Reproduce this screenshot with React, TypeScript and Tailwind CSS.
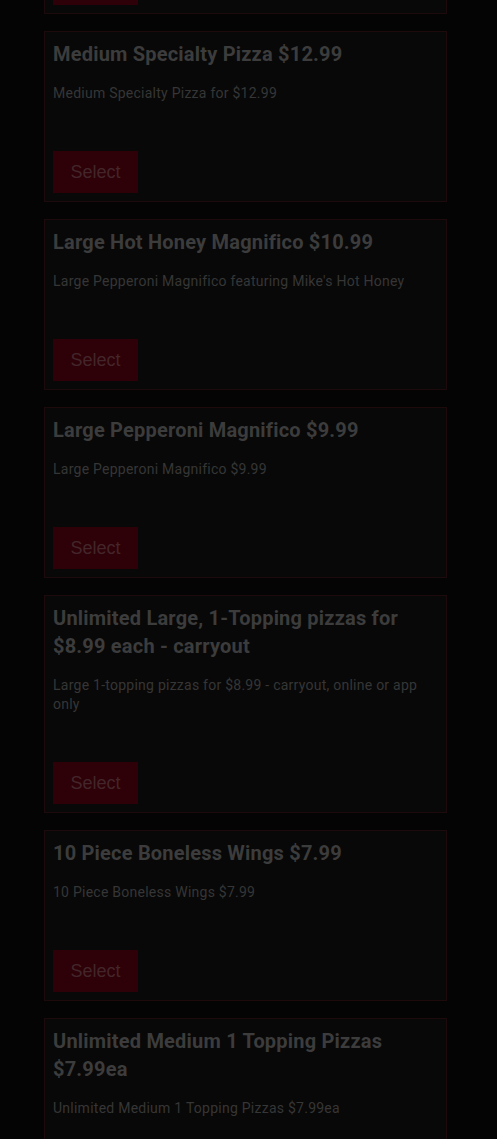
import React from 'react';

interface Deal {
  title: string;
  description: string;
}

const deals: Deal[] = [
  { title: 'Medium Specialty Pizza $12.99', description: 'Medium Specialty Pizza for $12.99' },
  { title: 'Large Hot Honey Magnifico $10.99', description: "Large Pepperoni Magnifico featuring Mike's Hot Honey" },
  { title: 'Large Pepperoni Magnifico $9.99', description: 'Large Pepperoni Magnifico $9.99' },
  {
    title: 'Unlimited Large, 1-Topping pizzas for $8.99 each - carryout',
    description: 'Large 1-topping pizzas for $8.99 - carryout, online or app only',
  },
  { title: '10 Piece Boneless Wings $7.99', description: '10 Piece Boneless Wings $7.99' },
  { title: 'Unlimited Medium 1 Topping Pizzas $7.99ea', description: 'Unlimited Medium 1 Topping Pizzas $7.99ea' },
];

const SelectButton: React.FC = () => (
  <button
    type="button"
    className="h-[42px] w-[85px] bg-[#2e0007] text-[18px] text-[#43262b] font-['Liberation_Sans',Arial,sans-serif]"
  >
    Select
  </button>
);

const DealCard: React.FC<{ deal: Deal }> = ({ deal }) => (
  <div className="flex flex-col border border-[#1c0a0d] bg-[#080808] px-2 pt-2 pb-2">
    <h3 className="text-[20px] leading-[28px] font-bold tracking-[0.2px] text-[#3c3c3c]">{deal.title}</h3>
    <p className="mt-4 text-[14px] leading-[19px] tracking-[0.25px] text-[#363636]">{deal.description}</p>
    <div className="mt-[48px]">
      <SelectButton />
    </div>
  </div>
);

export default function App() {
  return (
    <div className="h-[1139px] overflow-hidden bg-[#040404] font-['Roboto',sans-serif]">
      <div className="mx-[44px] flex w-[403px] flex-col gap-[17px]">
        {/* tail of the card scrolled above */}
        <div className="h-[14px] border-x border-b border-[#1c0a0d] bg-[#080808] px-2">
          <div className="h-[5px] w-[85px] bg-[#2e0007]" />
        </div>
        {deals.map((d) => (
          <DealCard key={d.title} deal={d} />
        ))}
      </div>
    </div>
  );
}
